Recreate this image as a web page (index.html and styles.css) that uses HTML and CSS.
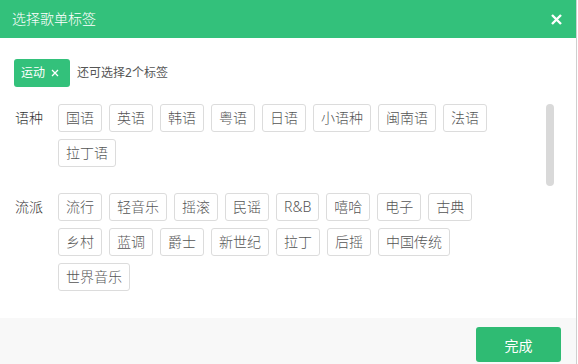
FILE: index.html
```html
<!DOCTYPE html>
<html lang="zh-CN">
<head>
  <meta charset="UTF-8" />
  <meta name="viewport" content="width=device-width, initial-scale=1.0"/>
  <title>选择歌单标签</title>
  <link rel="stylesheet" href="styles.css">
</head>
<body>

  <div class="dialog">
    <header class="dialog-head">
      <span class="dialog-title">选择歌单标签</span>
      <svg class="close" viewBox="0 0 11 11" width="11" height="11">
        <path d="M1 1 L10 10 M10 1 L1 10" />
      </svg>
    </header>

    <div class="dialog-body">
      <!-- picked tags -->
      <div class="picked">
        <span class="picked-tag">运动<svg viewBox="0 0 8 8" width="8" height="8"><path d="M1 1 L7 7 M7 1 L1 7" /></svg></span>
        <span class="hint">还可选择2个标签</span>
      </div>

      <div class="tag-scroll">
        <div class="group">
          <span class="group-name">语种</span>
          <div class="tags">
            <span class="tag">国语</span>
            <span class="tag">英语</span>
            <span class="tag">韩语</span>
            <span class="tag">粤语</span>
            <span class="tag">日语</span>
            <span class="tag">小语种</span>
            <span class="tag">闽南语</span>
            <span class="tag">法语</span>
            <span class="tag">拉丁语</span>
          </div>
        </div>

        <div class="group">
          <span class="group-name">流派</span>
          <div class="tags">
            <span class="tag">流行</span>
            <span class="tag">轻音乐</span>
            <span class="tag">摇滚</span>
            <span class="tag">民谣</span>
            <span class="tag">R&amp;B</span>
            <span class="tag">嘻哈</span>
            <span class="tag">电子</span>
            <span class="tag">古典</span>
            <span class="tag">乡村</span>
            <span class="tag">蓝调</span>
            <span class="tag">爵士</span>
            <span class="tag">新世纪</span>
            <span class="tag">拉丁</span>
            <span class="tag">后摇</span>
            <span class="tag">中国传统</span>
            <span class="tag">世界音乐</span>
          </div>
        </div>

        <!-- fake scrollbar thumb -->
        <div class="thumb"></div>
      </div>
    </div>

    <footer class="dialog-foot">
      <button class="done">完成</button>
    </footer>
  </div>

</body>
</html>
```

FILE: styles.css
```css
body {
  margin: 0;
  background: #fff;
  color: #333;
  font: 14px/1.4 "Noto Sans", "Noto Sans CJK SC", sans-serif;
}

.dialog {
  width: 576px;
  height: 364px;
  border-right: 1px solid #cfcfcf;
  display: flex;
  flex-direction: column;
  overflow: hidden;
}

.dialog-head {
  flex: none;
  height: 38px;
  padding: 0 14px 0 12px;
  background: #33c17b;
  color: #fff;
  display: flex;
  align-items: center;
  justify-content: space-between;
}

.dialog-title {
  font-size: 14px;
  font-weight: 300;
}

.close path {
  stroke: #fff;
  stroke-width: 2.4;
  fill: none;
}

.dialog-body {
  flex: 1;
  overflow: hidden;
  padding: 21px 0 0 14px;
}

.picked {
  display: flex;
  align-items: center;
  height: 28px;
}

.picked-tag {
  display: inline-flex;
  align-items: center;
  height: 28px;
  padding: 0 11px 0 7px;
  border-radius: 3px;
  background: #33c17b;
  color: #fff;
  font-size: 12px;
}

.picked-tag svg {
  margin-left: 6px;
}

.picked-tag path {
  stroke: #fff;
  stroke-width: 1.3;
  fill: none;
}

.hint {
  margin-left: 7px;
  font-size: 12px;
  color: #555;
}

.tag-scroll {
  position: relative;
  margin-top: 17px;
  padding-right: 61px;
}

.group {
  display: flex;
  margin-bottom: 26px;
}

.group-name {
  flex: none;
  width: 43px;
  padding-left: 1px;
  line-height: 28px;
  color: #333;
  font-weight: 300;
}

.tags {
  flex: 1;
  display: flex;
  flex-wrap: wrap;
  gap: 7px;
}

.tag {
  height: 26px;
  line-height: 26px;
  padding: 0 7px;
  border: 1px solid #dcdcdc;
  border-radius: 3px;
  color: #555;
  font-size: 14px;
  font-weight: 300;
}

.thumb {
  position: absolute;
  top: 0;
  right: 22px;
  width: 8px;
  height: 82px;
  border-radius: 4px;
  background: #d9d9d9;
}

.dialog-foot {
  flex: none;
  height: 46px;
  padding: 9px 15px 0 0;
  box-sizing: border-box;
  background: #f8f8f8;
  display: flex;
  justify-content: flex-end;
  align-items: flex-start;
}

.done {
  width: 85px;
  height: 35px;
  border: 0;
  border-radius: 3px;
  background: #2fbb73;
  color: #fff;
  font: 14px "Noto Sans", "Noto Sans CJK SC", sans-serif;
}
```
